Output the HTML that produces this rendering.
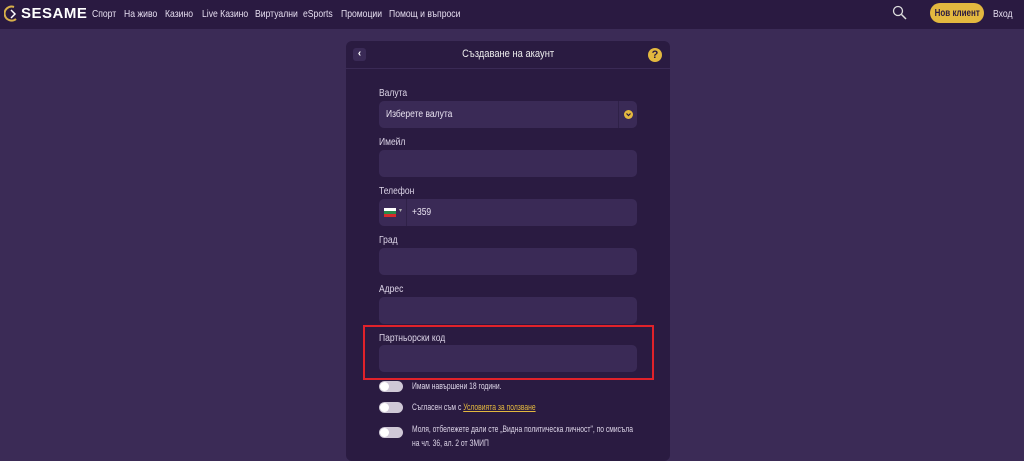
<!DOCTYPE html><html><head><meta charset="utf-8"><style>
*{margin:0;padding:0;box-sizing:border-box}
body{width:1024px;height:443px;overflow:hidden;background:#3b2b56;font-family:"Liberation Sans",sans-serif;color:#e8e2f0;position:relative}
span,div{white-space:nowrap}
.hdr{position:absolute;left:0;top:0;width:1024px;height:29px;background:#2a1a41}
.a{position:absolute;font-size:10.5px;top:8px;color:#e6def0;transform:scaleX(.82);transform-origin:left}
.card{position:absolute;left:346px;top:41px;width:324px;height:420px;background:#2a1b41;border-radius:6px}
.ch{position:absolute;left:0;top:0;width:324px;height:28px;border-bottom:1px solid #3a2a55}
.lbl{position:absolute;left:379px;font-size:10px;color:#ddd5e8;transform:scaleX(.85);transform-origin:left}
.inp{position:absolute;left:379px;width:258px;height:27px;background:#3a2a56;border-radius:5px}
.tg{position:absolute;left:379px;width:24px;height:11px;border-radius:6px;background:#cfc8d6}
.tg:after{content:"";position:absolute;left:1px;top:1px;width:9px;height:9px;border-radius:50%;background:#fff}
.t{position:absolute;left:412px;font-size:9px;color:#ddd5e8;transform:scaleX(.75);transform-origin:left}
.s{display:inline-block;transform:scaleX(.85);transform-origin:left}
</style></head><body>
<div class="hdr">
<svg style="position:absolute;left:4px;top:5px" width="16" height="18" viewBox="0 0 16 18"><path d="M10 2 A7 7 0 1 0 12 14" stroke="#d8b04a" stroke-width="2" fill="none"/><path d="M7 5 L11 9 L7 13" stroke="#fff" stroke-width="1.5" fill="none"/></svg>
<div style="position:absolute;left:21px;top:5px;font:bold 15px 'Liberation Sans',sans-serif;color:#fff;letter-spacing:.5px">SESAME</div>
<span class="a" style="left:92px">Спорт</span><span class="a" style="left:124px">На живо</span><span class="a" style="left:165px">Казино</span><span class="a" style="left:202px">Live Казино</span><span class="a" style="left:255px">Виртуални</span><span class="a" style="left:303px">eSports</span><span class="a" style="left:341px">Промоции</span><span class="a" style="left:389px">Помощ и въпроси</span>
<svg style="position:absolute;left:892px;top:5px" width="16" height="16" viewBox="0 0 16 16"><circle cx="6" cy="6" r="4.5" stroke="#ddd" stroke-width="1.3" fill="none"/><path d="M9.5 9.5 L14 14" stroke="#ddd" stroke-width="1.5"/></svg>
<div style="position:absolute;left:930px;top:3px;width:54px;height:20px;border-radius:10px;background:#e3b83f;color:#2a1a41;font-size:10px;font-weight:bold;display:flex;align-items:center;justify-content:center"><span style="display:inline-block;transform:scaleX(.8)">Нов клиент</span></div>
<span class="a" style="left:993px">Вход</span>
</div>
<div class="card"><div class="ch">
<div style="position:absolute;left:7px;top:7px;width:13px;height:13px;border-radius:3px;background:#3a2a56;color:#fff;font-size:10px;text-align:center;line-height:12px;font-weight:bold">‹</div>
<div style="position:absolute;left:0;width:324px;top:7px;text-align:center;font-size:11px;color:#eee"><span style="display:inline-block;transform:scaleX(.85)">Създаване на акаунт</span></div>
<div style="position:absolute;left:302px;top:7px;width:14px;height:14px;border-radius:50%;background:#e3b83f;color:#2a1a41;font-size:11px;font-weight:bold;text-align:center;line-height:14px">?</div>
</div></div>
<div class="lbl" style="top:88px">Валута</div>
<div class="inp" style="top:101px"><span class="s" style="position:absolute;left:7px;top:8px;font-size:10px">Изберете валута</span><div style="position:absolute;right:18px;top:0;width:1px;height:27px;background:#2f2148"></div><svg style="position:absolute;right:4px;top:9px" width="9" height="9" viewBox="0 0 9 9"><circle cx="4.5" cy="4.5" r="4.5" fill="#e3b83f"/><path d="M2.5 3.5 L4.5 5.5 L6.5 3.5" stroke="#2a1a41" stroke-width="1.2" fill="none"/></svg></div>
<div class="lbl" style="top:137px">Имейл</div><div class="inp" style="top:150px"></div>
<div class="lbl" style="top:186px">Телефон</div><div class="inp" style="top:199px"><div style="position:absolute;left:5px;top:9px;width:12px;height:9px;background:linear-gradient(#fff 33%,#2a8a4a 33%,#2a8a4a 66%,#d62b2b 66%)"></div><span style="position:absolute;left:20px;top:8px;font-size:6px;color:#aaa">▾</span><div style="position:absolute;left:27px;top:0;width:1px;height:27px;background:#2f2148"></div><span class="s" style="position:absolute;left:33px;top:8px;font-size:10px">+359</span></div>
<div class="lbl" style="top:235px">Град</div><div class="inp" style="top:248px"></div>
<div class="lbl" style="top:284px">Адрес</div><div class="inp" style="top:297px"></div>
<div class="lbl" style="top:333px">Партньорски код</div><div class="inp" style="top:345px"></div>
<div style="position:absolute;left:363px;top:325px;width:291px;height:55px;border:2px solid #e0222a"></div>
<div class="tg" style="top:381px"></div><div class="t" style="top:381px">Имам навършени 18 години.</div>
<div class="tg" style="top:402px"></div><div class="t" style="top:402px">Съгласен съм с <span style="color:#e3b83f;text-decoration:underline">Условията за ползване</span></div>
<div class="tg" style="top:427px"></div><div class="t" style="top:422px;line-height:14px">Моля, отбележете дали сте „Видна политическа личност", по смисъла<br>на чл. 36, ал. 2 от ЗМИП</div>
</body></html>
